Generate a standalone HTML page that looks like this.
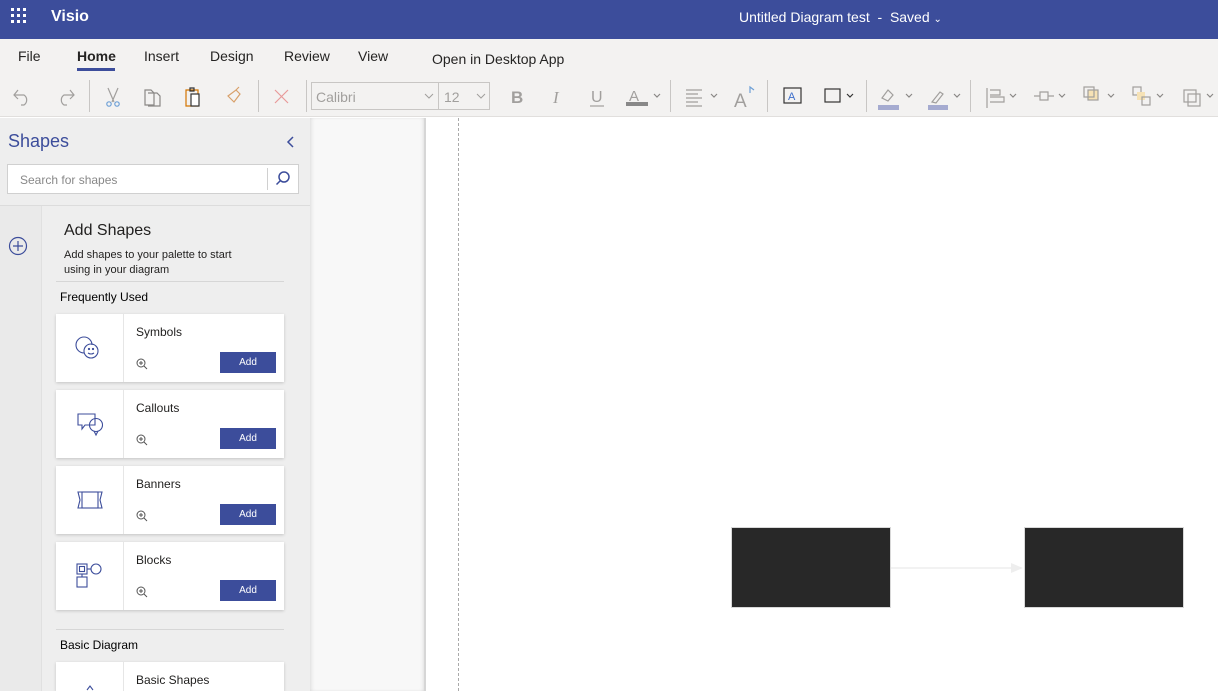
<!DOCTYPE html>
<html style="width:1218px;height:691px;overflow:hidden"><head><style>
*{margin:0;padding:0;box-sizing:border-box}
body{width:1218px;height:691px;overflow:hidden;position:relative;font-family:"Liberation Sans",sans-serif;background:#fff}
.a{position:absolute}
.hdr{left:0;top:0;width:1218px;height:39px;background:#3c4d9b}
.rib{left:0;top:39px;width:1218px;height:78px;background:#f3f2f1;border-bottom:1px solid #e1dfdd}
.tab{top:48px;font-size:14px;color:#252423}
.sep{top:80px;width:1px;height:32px;background:#c8c6c4}
.card{left:56px;width:228px;height:68px;background:#fff;box-shadow:0 1px 3px rgba(0,0,0,.18)}
.card .ic{position:absolute;left:0;top:0;width:68px;height:68px;border-right:1px solid #e6e6e6}
.card .t{position:absolute;left:80px;top:11px;font-size:12px;color:#201f1e}
.card .add{position:absolute;left:164px;top:38px;width:56px;height:21px;background:#3c4d9b;color:#fff;font-size:10px;text-align:center;line-height:21px}
.card .z{position:absolute;left:80px;top:44px}
</style></head><body>
<div class="a hdr"></div>
<svg class="a" style="left:11px;top:8px" width="16" height="16"><g fill="#fff"><rect x="0" y="0" width="3" height="3"/><rect x="6" y="0" width="3" height="3"/><rect x="12" y="0" width="3" height="3"/><rect x="0" y="6" width="3" height="3"/><rect x="6" y="6" width="3" height="3"/><rect x="12" y="6" width="3" height="3"/><rect x="0" y="12" width="3" height="3"/><rect x="6" y="12" width="3" height="3"/><rect x="12" y="12" width="3" height="3"/></g></svg>
<div class="a" style="left:51px;top:8px;color:#fff;font-size:16px;font-weight:bold">Visio</div>
<div class="a" style="left:739px;top:9px;color:#fff;font-size:14px">Untitled Diagram test&nbsp; - &nbsp;Saved <span style="font-size:10px">&#8964;</span></div>

<div class="a rib"></div>
<div class="a tab" style="left:18px">File</div>
<div class="a tab" style="left:77px;font-weight:600">Home</div>
<div class="a" style="left:77px;top:68px;width:38px;height:3px;background:#3c4d9b"></div>
<div class="a tab" style="left:144px">Insert</div>
<div class="a tab" style="left:210px">Design</div>
<div class="a tab" style="left:284px">Review</div>
<div class="a tab" style="left:358px">View</div>
<div class="a tab" style="left:432px;top:51px">Open in Desktop App</div>

<svg class="a" style="left:0;top:80px" width="1218" height="34" fill="none" stroke-width="1.2">
<path d="M18 10 l-4 5 l4 4 M14 15 h10 a6 6 0 0 1 0 10 h-3" stroke="#a19f9d"/>
<path d="M70 10 l4 5 l-4 4 M74 15 h-10 a6 6 0 0 0 0 10 h3" stroke="#a19f9d"/>
<path d="M108 8 l6 14 M118 8 l-6 14" stroke="#a19f9d"/><circle cx="109" cy="24" r="2.2" stroke="#6ea0d6"/><circle cx="117" cy="24" r="2.2" stroke="#6ea0d6"/>
<path d="M145 10 h6 l3 3 v12 h-9z M148 13 h9 l3 3 v10 h-12" stroke="#8a8886"/>
<path d="M186 10 h12 v16 h-12z" stroke="#d47500"/><path d="M190 8 h4 v3 h-4z" stroke="#333"/><rect x="191" y="14" width="8" height="12" stroke="#333" fill="#fff"/>
<path d="M228 16 l8 -6 l4 4 l-6 8 z M236 10 l3 -3" stroke="#d8a06a"/>
<path d="M275 10 l13 13 M288 10 l-13 13" stroke="#e89a9a"/>
<text x="511" y="23" font-family="Liberation Sans" font-weight="bold" font-size="17" fill="#a19f9d" stroke="none">B</text>
<text x="553" y="23" font-family="Liberation Serif" font-style="italic" font-size="17" fill="#a19f9d" stroke="none">I</text>
<text x="591" y="22" font-family="Liberation Sans" font-size="16" fill="#a19f9d" stroke="none">U</text><path d="M590 26 h14" stroke="#a19f9d"/>
<text x="629" y="21" font-family="Liberation Sans" font-size="15" fill="#a19f9d" stroke="none">A</text><rect x="626" y="22" width="22" height="4" fill="#888" stroke="none"/>
<path d="M686 10 h16 M686 14 h12 M686 18 h16 M686 22 h12 M686 26 h16" stroke="#a19f9d"/>
<text x="734" y="27" font-family="Liberation Sans" font-size="19" fill="#a19f9d" stroke="none">A</text><path d="M750 13 v-6 l4 3" stroke="#6ea0d6"/>
<rect x="784" y="8" width="17" height="15" stroke="#333"/><text x="788" y="20" font-size="11" fill="#3c6ecb" stroke="none" font-family="Liberation Sans">A</text>
<rect x="825" y="9" width="15" height="13" stroke="#333"/><path d="M847 14 l3 3 l3 -3" stroke="#333"/>
<path d="M882 18 l6 -8 l5 5 l-5 6z" stroke="#a19f9d"/><rect x="878" y="25" width="21" height="5" fill="#a5abd0" stroke="none"/>
<path d="M932 22 l8 -10 l3 2 l-7 9z" stroke="#a19f9d"/><rect x="928" y="25" width="20" height="5" fill="#a5abd0" stroke="none"/>
<path d="M987 8 v20 M990 10 h10 v5 h-10 M990 17 h14 v5 h-14" stroke="#a19f9d"/>
<path d="M1040 12 h8 v8 h-8z M1034 16 h6 M1048 16 h6" stroke="#a19f9d"/>
<rect x="1088" y="10" width="10" height="10" fill="#f6e2b5" stroke="#a19f9d"/><rect x="1084" y="7" width="10" height="10" stroke="#a19f9d"/>
<rect x="1133" y="7" width="8" height="8" stroke="#a19f9d"/><rect x="1137" y="12" width="8" height="8" fill="#f6e2b5" stroke="none"/><rect x="1142" y="17" width="8" height="8" stroke="#a19f9d"/>
<rect x="1184" y="10" width="12" height="12" stroke="#a19f9d"/><rect x="1188" y="14" width="12" height="12" stroke="#a19f9d"/>
<g stroke="#8a8886"><path d="M654 14 l3 3 l3 -3 M711 14 l3 3 l3 -3 M906 14 l3 3 l3 -3 M954 14 l3 3 l3 -3 M1010 14 l3 3 l3 -3 M1059 14 l3 3 l3 -3 M1108 14 l3 3 l3 -3 M1157 14 l3 3 l3 -3 M1207 14 l3 3 l3 -3"/></g>
</svg>
<div class="a sep" style="left:89px"></div><div class="a sep" style="left:258px"></div><div class="a sep" style="left:306px"></div><div class="a sep" style="left:670px"></div><div class="a sep" style="left:767px"></div><div class="a sep" style="left:866px"></div><div class="a sep" style="left:970px"></div>
<div class="a" style="left:311px;top:82px;width:179px;height:28px;border:1px solid #c8c6c4;background:#f3f2f1"></div>
<div class="a" style="left:438px;top:82px;width:1px;height:28px;background:#c8c6c4"></div>
<div class="a" style="left:316px;top:89px;font-size:14px;color:#a19f9d">Calibri</div>
<div class="a" style="left:444px;top:89px;font-size:14px;color:#a19f9d">12</div>
<svg class="a" style="left:424px;top:92px" width="66" height="10" fill="none" stroke="#a19f9d"><path d="M1 2 l4 4 l4 -4 M53 2 l4 4 l4 -4"/></svg>

<div class="a" style="left:0;top:118px;width:310px;height:573px;background:#eeeeee"></div>
<div class="a" style="left:0;top:206px;width:41px;height:485px;background:#eaeaea"></div>
<div class="a" style="left:0;top:205px;width:310px;height:1px;background:#dcdcdc"></div>
<div class="a" style="left:41px;top:206px;width:1px;height:485px;background:#e0e0e0"></div>
<div class="a" style="left:8px;top:131px;font-size:18px;color:#3c4d9b">Shapes</div>
<svg class="a" style="left:286px;top:135px" width="10" height="14" fill="none" stroke="#3c4d9b" stroke-width="1.5"><path d="M7 2 l-5 5 l5 5"/></svg>
<div class="a" style="left:7px;top:164px;width:292px;height:30px;background:#fff;border:1px solid #d0d0d0"></div>
<div class="a" style="left:267px;top:168px;width:1px;height:22px;background:#d0d0d0"></div>
<div class="a" style="left:20px;top:173px;font-size:12px;color:#888">Search for shapes</div>
<svg class="a" style="left:275px;top:170px" width="16" height="17" fill="none" stroke="#3c4d9b" stroke-width="1.5"><circle cx="9" cy="7" r="5"/><path d="M5.5 10.5 l-4 4"/></svg>
<svg class="a" style="left:8px;top:236px" width="20" height="20" fill="none" stroke="#3c4d9b" stroke-width="1.2"><circle cx="10" cy="10" r="8.5"/><path d="M10 5 v10 M5 10 h10"/></svg>
<div class="a" style="left:64px;top:222px;font-size:16px;color:#201f1e">Add Shapes</div>
<div class="a" style="left:64px;top:248px;font-size:11px;color:#201f1e;line-height:15px">Add shapes to your palette to start<br>using in your diagram</div>
<div class="a" style="left:56px;top:281px;width:228px;height:1px;background:#d6d6d6"></div>
<div class="a" style="left:60px;top:290px;font-size:12px;color:#000">Frequently Used</div>
<div class="a" style="left:56px;top:629px;width:228px;height:1px;background:#d6d6d6"></div>
<div class="a" style="left:60px;top:638px;font-size:12px;color:#000">Basic Diagram</div>

<div class="a card" style="top:314px"><div class="ic"><svg width="68" height="68" fill="none" stroke="#3c4d9b" stroke-width="1.1"><path d="M28 39 a8 8 0 1 1 8 -8"/><circle cx="35" cy="37" r="7"/><circle cx="33" cy="35" r=".6"/><circle cx="37" cy="35" r=".6"/><path d="M32 39 q3 2 6 0"/></svg></div><div class="t">Symbols</div><svg class="z" width="12" height="12" fill="none" stroke="#555"><circle cx="5" cy="5" r="4"/><path d="M8 8 l3 3 M3 5 h4 M5 3 v4"/></svg><div class="add">Add</div></div>
<div class="a card" style="top:390px"><div class="ic"><svg width="68" height="68" fill="none" stroke="#3c4d9b" stroke-width="1.1"><path d="M22 24 h17 v11 h-10 l-3 4 v-4 h-4z"/><circle cx="40" cy="35" r="6.5"/><path d="M38 41 l2 4 l2 -4"/></svg></div><div class="t">Callouts</div><svg class="z" width="12" height="12" fill="none" stroke="#555"><circle cx="5" cy="5" r="4"/><path d="M8 8 l3 3 M3 5 h4 M5 3 v4"/></svg><div class="add">Add</div></div>
<div class="a card" style="top:466px"><div class="ic"><svg width="68" height="68" fill="none" stroke="#3c4d9b" stroke-width="1.1"><rect x="26" y="26" width="16" height="16"/><path d="M26 26 h-4 l2 8 l-2 8 h4 M42 26 h4 l-2 8 l2 8 h-4"/></svg></div><div class="t">Banners</div><svg class="z" width="12" height="12" fill="none" stroke="#555"><circle cx="5" cy="5" r="4"/><path d="M8 8 l3 3 M3 5 h4 M5 3 v4"/></svg><div class="add">Add</div></div>
<div class="a card" style="top:542px"><div class="ic"><svg width="68" height="68" fill="none" stroke="#3c4d9b" stroke-width="1.1"><rect x="21" y="22" width="10" height="10"/><rect x="23.5" y="24.5" width="5" height="5"/><path d="M31 27 h4"/><circle cx="40" cy="27" r="5"/><path d="M26 32 v3"/><rect x="21" y="35" width="10" height="10"/></svg></div><div class="t">Blocks</div><svg class="z" width="12" height="12" fill="none" stroke="#555"><circle cx="5" cy="5" r="4"/><path d="M8 8 l3 3 M3 5 h4 M5 3 v4"/></svg><div class="add">Add</div></div>
<div class="a card" style="top:662px;height:29px"><div class="ic" style="height:29px"><svg width="68" height="29" fill="none" stroke="#3c4d9b" stroke-width="1.1"><path d="M31 28 l3 -4 l3 4"/></svg></div><div class="t">Basic Shapes</div></div>

<div class="a" style="left:310px;top:118px;width:115px;height:573px;background:#f8f8f8;box-shadow:inset 3px 0 4px -2px rgba(0,0,0,.12),inset -3px 0 4px -2px rgba(0,0,0,.15)"></div>
<div class="a" style="left:424px;top:118px;width:2px;height:573px;background:#d6d6d6"></div>
<div class="a" style="left:458px;top:118px;width:0;height:573px;border-left:1px dashed #aaa"></div>
<div class="a" style="left:731px;top:527px;width:160px;height:81px;background:#282828;border:1px solid #d8d8d8"></div>
<div class="a" style="left:1024px;top:527px;width:160px;height:81px;background:#282828;border:1px solid #d8d8d8"></div>
<svg class="a" style="left:891px;top:560px" width="134" height="16"><path d="M0 8 h122" stroke="#eeeeee" stroke-width="1.5"/><path d="M120 3 l12 5 l-12 5z" fill="#eeeeee"/></svg>
</body></html>
